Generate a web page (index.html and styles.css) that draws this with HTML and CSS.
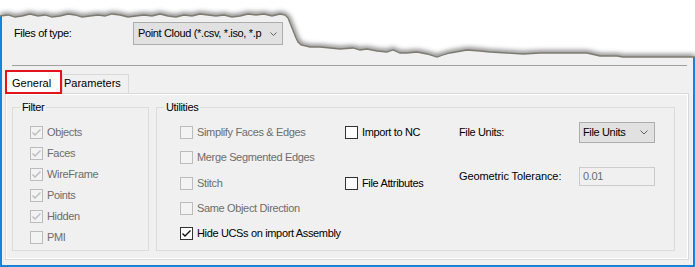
FILE: index.html
```html
<!DOCTYPE html>
<html>
<head>
<meta charset="utf-8">
<title>Import Options</title>
<link rel="stylesheet" href="styles.css">
</head>
<body>
<div class="window">
  <div class="filetype">
    <span class="lbl dlg">Files of type:</span>
    <div class="combo combo-wide">
      <span class="combo-text dlg">Point Cloud (*.csv, *.iso, *.p</span>
      <svg class="chev" width="7" height="4" viewBox="0 0 7 4"><polyline points="0.5,0.5 3.5,3.5 6.5,0.5"/></svg>
    </div>
  </div>
  <div class="sep"></div>
  <div class="tabs">
    <div class="tab tab-active">General</div>
    <div class="tab">Parameters</div>
  </div>
  <div class="panel">
    <fieldset class="group group-filter">
      <legend class="dlg">Filter</legend>
      <div class="filter-list">
        <div class="cb is-disabled"><span class="box"><svg class="tick" viewBox="0 0 11 11"><polyline points="1.5,5.5 4,8 9.5,2.5"/></svg></span><span class="dlg">Objects</span></div>
        <div class="cb is-disabled"><span class="box"><svg class="tick" viewBox="0 0 11 11"><polyline points="1.5,5.5 4,8 9.5,2.5"/></svg></span><span class="dlg">Faces</span></div>
        <div class="cb is-disabled"><span class="box"><svg class="tick" viewBox="0 0 11 11"><polyline points="1.5,5.5 4,8 9.5,2.5"/></svg></span><span class="dlg">WireFrame</span></div>
        <div class="cb is-disabled"><span class="box"><svg class="tick" viewBox="0 0 11 11"><polyline points="1.5,5.5 4,8 9.5,2.5"/></svg></span><span class="dlg">Points</span></div>
        <div class="cb is-disabled"><span class="box"><svg class="tick" viewBox="0 0 11 11"><polyline points="1.5,5.5 4,8 9.5,2.5"/></svg></span><span class="dlg">Hidden</span></div>
        <div class="cb is-disabled"><span class="box"></span><span class="dlg">PMI</span></div>
      </div>
    </fieldset>
    <fieldset class="group group-util">
      <legend class="dlg">Utilities</legend>
      <div class="util-body">
        <div class="util-grid">
          <div class="cb is-disabled c1 r1"><span class="box"></span><span class="dlg">Simplify Faces &amp; Edges</span></div>
          <div class="cb is-disabled c1 r2"><span class="box"></span><span class="dlg">Merge Segmented Edges</span></div>
          <div class="cb is-disabled c1 r3"><span class="box"></span><span class="dlg">Stitch</span></div>
          <div class="cb is-disabled c1 r4"><span class="box"></span><span class="dlg">Same Object Direction</span></div>
          <div class="cb c1 r5"><span class="box"><svg class="tick" viewBox="0 0 11 11"><polyline points="1.5,5.5 4,8 9.5,2.5"/></svg></span><span class="dlg">Hide UCSs on import Assembly</span></div>
          <div class="cb c2 r1"><span class="box"></span><span class="dlg">Import to NC</span></div>
          <div class="cb c2 r3"><span class="box"></span><span class="dlg">File Attributes</span></div>
        </div>
        <div class="settings">
          <div class="set-row set-units">
            <span class="set-lbl dlg">File Units:</span>
            <div class="combo combo-small">
              <span class="combo-text dlg">File Units</span>
              <svg class="chev" width="8" height="5" viewBox="0 0 8 5"><polyline points="0.5,0.5 4,4 7.5,0.5"/></svg>
            </div>
          </div>
          <div class="set-row set-tol">
            <span class="set-lbl dlg">Geometric Tolerance:</span>
            <div class="textbox"><span class="dlg">0.01</span></div>
          </div>
        </div>
      </div>
    </fieldset>
  </div>
</div>
<svg class="torn" width="695" height="66" viewBox="0 0 695 66">
  <defs>
    <filter id="blur" x="-5%" y="-100%" width="110%" height="300%"><feGaussianBlur stdDeviation="2.4"/></filter>
    <clipPath id="paper"><path d="M0,0 L695,0 L695,57 L623,57 L617,56 L600,56 L587,53 L573,53 L557,53 L540,53 L523,54 L507,53 L490,52 L480,51 L467,50 L450,53 L443,55 L437,57 L427,54 L417,52 L407,53 L400,53 L393,50 L387,52 L377,51 L367,49 L360,50 L353,48 L340,49 L330,48 L320,47 L310,47 L301,45 L298,42 L296,38 L294,33 L292,28 L290,23 L288,18 L285,15 L280,14 L272,16 L264,14 L256,15 L248,14 L240,16 L232,17 L224,15 L216,16 L208,15 L200,14 L192,16 L184,15 L176,17 L168,16 L160,14 L152,16 L144,15 L136,16 L128,17 L120,15 L112,14 L105,16 L98,15 L90,16 L82,17 L75,15 L68,14 L60,16 L52,17 L45,15 L38,16 L30,14 L22,16 L15,17 L8,15 L0,16 Z"/></clipPath>
  </defs>
  <path class="paper" d="M0,0 L695,0 L695,57 L623,57 L617,56 L600,56 L587,53 L573,53 L557,53 L540,53 L523,54 L507,53 L490,52 L480,51 L467,50 L450,53 L443,55 L437,57 L427,54 L417,52 L407,53 L400,53 L393,50 L387,52 L377,51 L367,49 L360,50 L353,48 L340,49 L330,48 L320,47 L310,47 L301,45 L298,42 L296,38 L294,33 L292,28 L290,23 L288,18 L285,15 L280,14 L272,16 L264,14 L256,15 L248,14 L240,16 L232,17 L224,15 L216,16 L208,15 L200,14 L192,16 L184,15 L176,17 L168,16 L160,14 L152,16 L144,15 L136,16 L128,17 L120,15 L112,14 L105,16 L98,15 L90,16 L82,17 L75,15 L68,14 L60,16 L52,17 L45,15 L38,16 L30,14 L22,16 L15,17 L8,15 L0,16 Z"/>
  <g clip-path="url(#paper)">
    <polyline class="shadow" filter="url(#blur)" points="0,16 8,15 15,17 22,16 30,14 38,16 45,15 52,17 60,16 68,14 75,15 82,17 90,16 98,15 105,16 112,14 120,15 128,17 136,16 144,15 152,16 160,14 168,16 176,17 184,15 192,16 200,14 208,15 216,16 224,15 232,17 240,16 248,14 256,15 264,14 272,16 280,14 285,15 288,18 290,23 292,28 294,33 296,38 298,42 301,45 310,47 320,47 330,48 340,49 353,48 360,50 367,49 377,51 387,52 393,50 400,53 407,53 417,52 427,54 437,57 443,55 450,53 467,50 480,51 490,52 507,53 523,54 540,53 557,53 573,53 587,53 600,56 617,56 623,57 695,57"/>
  </g>
  <polyline class="edge" points="0,16 8,15 15,17 22,16 30,14 38,16 45,15 52,17 60,16 68,14 75,15 82,17 90,16 98,15 105,16 112,14 120,15 128,17 136,16 144,15 152,16 160,14 168,16 176,17 184,15 192,16 200,14 208,15 216,16 224,15 232,17 240,16 248,14 256,15 264,14 272,16 280,14 285,15 288,18 290,23 292,28 294,33 296,38 298,42 301,45 310,47 320,47 330,48 340,49 353,48 360,50 367,49 377,51 387,52 393,50 400,53 407,53 417,52 427,54 437,57 443,55 450,53 467,50 480,51 490,52 507,53 523,54 540,53 557,53 573,53 587,53 600,56 617,56 623,57 695,57"/>
</svg>
</body>
</html>
```

FILE: styles.css
```css
* { box-sizing: border-box; }

html, body {
  margin: 0;
  padding: 0;
}

body {
  width: 695px;
  height: 267px;
  position: relative;
  overflow: hidden;
  background: #ffffff;
  font-family: "Liberation Sans", Arial, sans-serif;
  font-size: 11px;
  line-height: 13px;
  color: #000;
}

.dlg { letter-spacing: -0.35px; }

.window {
  width: 695px;
  height: 267px;
  overflow: hidden;
  background: #f0f0f0;
  border: 2px solid #1883d7;
  border-top: none;
}

/* Files of type row */
.filetype {
  display: flex;
  align-items: center;
  height: 23px;
  margin-top: 22px;
  padding-left: 12px;
}
.filetype .lbl { width: 119px; }

.combo {
  display: flex;
  align-items: center;
  background: #e1e1e1;
  border: 1px solid #adadad;
}
.combo-text {
  overflow: hidden;
  white-space: nowrap;
}
.combo-wide {
  width: 150px;
  height: 23px;
  padding-left: 4px;
}
.combo-wide .combo-text { width: 124px; }
.combo-wide .chev { margin-left: 8px; }

.combo-small {
  width: 76px;
  height: 21px;
  padding-left: 3px;
}
.combo-small .combo-text { width: 57px; }

.chev polyline {
  fill: none;
  stroke: #606060;
  stroke-width: 1;
}

.sep {
  margin: 20px 0 0 10px;
  width: 675px;
  height: 1px;
  background: #a0a0a0;
}

/* Tabs */
.tabs {
  display: flex;
  align-items: flex-start;
  height: 23px;
  margin: 4px 0 0 3px;
}
.tab {
  width: 67px;
  height: 19px;
  margin-top: 4px;
  padding: 2px 0 0 1px;
  border: 1px solid #d9d9d9;
  border-bottom: none;
  background: #f0f0f0;
  white-space: nowrap;
}
.tab-active {
  position: relative;
  z-index: 1;
  width: 57px;
  height: 24px;
  margin-top: 0;
  padding: 5px 0 0 5px;
  border: 2px solid #e3141b;
  background: #ffffff;
}

/* Tab page */
.panel {
  display: flex;
  gap: 7px;
  margin-left: 3px;
  width: 684px;
  height: 167px;
  padding: 7px 0 0 6px;
  border: 1px solid #d9d9d9;
  box-shadow: inset 0 0 0 1px #ffffff;
}

.group {
  margin: 0;
  padding: 0;
  min-width: 0;
  height: 150px;
  border: 1px solid #dcdcdc;
}
.group legend {
  margin-left: 7px;
  padding: 0 2px;
  line-height: 12px;
}
.group-filter { width: 137px; }
.group-util { width: 519px; }

.filter-list {
  display: flex;
  flex-direction: column;
  padding: 9px 0 0 17px;
}
.filter-list .cb { height: 21px; }

/* Checkbox */
.cb {
  display: flex;
  align-items: center;
  gap: 4px;
  white-space: nowrap;
}
.box {
  flex: none;
  display: flex;
  align-items: center;
  justify-content: center;
  width: 13px;
  height: 13px;
  border: 1px solid #333333;
  background: #ffffff;
}
.tick {
  width: 11px;
  height: 11px;
}
.tick polyline {
  fill: none;
  stroke: #111;
  stroke-width: 1.4;
}
.is-disabled { color: #6d6d6d; }
.is-disabled .box {
  border-color: #bcbcbc;
  background: #f3f3f3;
}
.is-disabled .tick polyline { stroke: #bcbcbc; }

/* Utilities */
.util-body {
  display: flex;
  padding: 7px 0 0 23px;
}
.util-grid {
  display: grid;
  grid-template-columns: 165px 114px;
  grid-template-rows: repeat(5, 25.33px);
}
.c1 { grid-column: 1; }
.c2 { grid-column: 2; }
.r1 { grid-row: 1; }
.r2 { grid-row: 2; }
.r3 { grid-row: 3; }
.r4 { grid-row: 4; }
.r5 { grid-row: 5; }

.settings {
  display: flex;
  flex-direction: column;
  padding-top: 2px;
}
.set-row {
  display: flex;
  align-items: center;
}
.set-units { height: 21px; }
.set-tol {
  height: 19px;
  margin-top: 24px;
}
.set-lbl { width: 120px; }
.set-tol .set-lbl { letter-spacing: -0.1px; }

.textbox {
  width: 76px;
  height: 19px;
  padding-left: 3px;
  display: flex;
  align-items: center;
  border: 1px solid #cccccc;
  background: #f0f0f0;
  color: #6d6d6d;
}

/* Torn paper edge overlay */
.torn {
  position: absolute;
  top: 0;
  left: 0;
  z-index: 5;
}
.torn .paper { fill: #ffffff; }
.torn .shadow {
  fill: none;
  stroke: #4a4a4a;
  stroke-width: 4.5;
  opacity: 0.8;
}
.torn .edge {
  fill: none;
  stroke: #7d7b70;
  stroke-width: 1.3;
}
```
